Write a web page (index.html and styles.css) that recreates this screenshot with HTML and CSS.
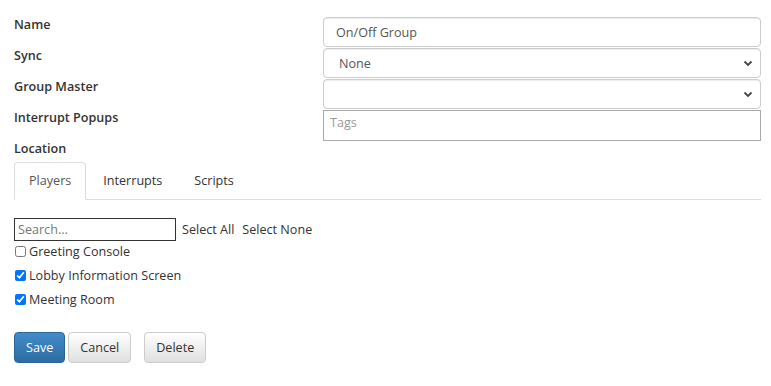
FILE: index.html
```html
<!DOCTYPE html>
<html lang="en">
<head>
  <meta charset="UTF-8">
  <title>On/Off Group</title>
  <link rel="stylesheet" href="styles.css">
</head>
<body>
  <!-- group settings -->
  <div class="settings">
    <div class="labels">
      <div class="label">Name</div>
      <div class="label">Sync</div>
      <div class="label">Group Master</div>
      <div class="label">Interrupt Popups</div>
      <div class="label last">Location</div>
    </div>
    <div class="fields">
      <input type="text" class="field" value="On/Off Group">
      <div class="field select">
        <span>None</span>
        <svg width="10" height="7" viewBox="0 0 10 7"><path d="M1.5 1.5 L5 5 L8.5 1.5" fill="none" stroke="#444" stroke-width="1.8"/></svg>
      </div>
      <div class="field select">
        <span></span>
        <svg width="10" height="7" viewBox="0 0 10 7"><path d="M1.5 1.5 L5 5 L8.5 1.5" fill="none" stroke="#444" stroke-width="1.8"/></svg>
      </div>
      <input type="text" class="tags" placeholder="Tags">
    </div>
  </div>

  <!-- tabs -->
  <ul class="tabs">
    <li class="tab active">Players</li>
    <li class="tab">Interrupts</li>
    <li class="tab">Scripts</li>
  </ul>

  <div class="players">
    <div class="search-row">
      <input type="text" class="search" placeholder="Search...">
      <span class="link">Select All</span>
      <span class="link">Select None</span>
    </div>
    <label class="player first"><input type="checkbox"> Greeting Console</label>
    <label class="player"><input type="checkbox" checked> Lobby Information Screen</label>
    <label class="player"><input type="checkbox" checked> Meeting Room</label>
  </div>

  <div class="actions">
    <button class="btn primary">Save</button>
    <button class="btn">Cancel</button>
    <button class="btn delete">Delete</button>
  </div>
</body>
</html>
```

FILE: styles.css
```css
* {
  box-sizing: border-box;
}
body {
  font-family: 'Open Sans', sans-serif;
  font-size: 12.6px;
  color: #333;
  background: #fff;
  margin: 0;
  padding: 0 10px 0 14px;
}
.settings {
  display: flex;
}
.labels {
  width: 309px;
  padding-top: 9px;
}
.label {
  height: 31px;
  line-height: 31px;
  font-weight: 600;
  color: #333;
}
.label.last {
  height: 24px;
}
.fields {
  flex: 1;
  margin-top: 17px;
  display: flex;
  flex-direction: column;
}
.field {
  height: 30px;
  margin-bottom: 1px;
  border: 1px solid #ccc;
  border-radius: 4px;
  box-shadow: inset 0 1px 1px rgba(0, 0, 0, 0.075);
  font-family: inherit;
  font-size: 12.6px;
  color: #555;
  padding: 0 12px;
  background: #fff;
}
.select {
  display: flex;
  align-items: center;
  justify-content: space-between;
  padding: 0 7px 0 15px;
}
.tags {
  height: 31px;
  border: 1px solid #a9a9a9;
  font-family: inherit;
  font-size: 12.6px;
  padding: 0 6px 7px;
}
.tags::placeholder {
  color: #999;
}
.tabs {
  list-style: none;
  margin: 5px 0 0;
  padding: 0;
  display: flex;
  border-bottom: 1px solid #ddd;
}
.tab {
  height: 38px;
  line-height: 36px;
  padding: 0 14px;
  margin: 0 2px -1px 0;
  border: 1px solid transparent;
  border-radius: 4px 4px 0 0;
  color: #333;
}
.tab.active {
  color: #555;
  border-color: #ddd #ddd #fff;
  background: #fff;
}
.players {
  margin-top: 18px;
}
.search-row {
  display: flex;
  align-items: center;
}
.search {
  width: 162px;
  height: 23px;
  border: 1px solid #333;
  font-family: inherit;
  font-size: 12.6px;
  padding: 0 3px;
  margin: 0 6px 0 0;
}
.search::placeholder {
  color: #777;
}
.link {
  margin-right: 8px;
  color: #333;
}
.player {
  display: flex;
  align-items: center;
  height: 24px;
  color: #333;
}
.player.first {
  height: 20px;
  margin-bottom: 2px;
}
.player input {
  width: 11px;
  height: 11px;
  margin: 0 3px 0 1px;
}
.actions {
  margin-top: 21px;
  display: flex;
}
.btn {
  height: 31px;
  padding: 0 11px;
  border: 1px solid #ccc;
  border-radius: 4px;
  background: linear-gradient(#fff, #e0e0e0);
  font-family: inherit;
  font-size: 12.6px;
  color: #333;
  margin-right: 3px;
}
.btn.primary {
  background: linear-gradient(#428bca, #2d6ca2);
  border-color: #2b669a;
  color: #fff;
}
.btn.delete {
  margin-left: 10px;
}
```
